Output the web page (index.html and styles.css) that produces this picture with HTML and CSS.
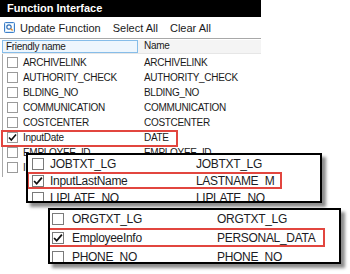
FILE: index.html
```html
<!DOCTYPE html>
<html lang="en">
<head>
    <meta charset="UTF-8">
    <title>Function Interface</title>
    <link rel="stylesheet" href="styles.css">
</head>
<body>

<div class="window">
    <div class="titlebar">Function Interface</div>

    <!-- Toolbar -->
    <div class="toolbar">
        <span class="tool-icon">
            <svg width="11" height="11" viewBox="0 0 11 11">
                <rect x="0.5" y="0.5" width="10" height="10" rx="1" fill="#d9ecfb" stroke="#3d7fc9"/>
                <rect x="2" y="2" width="7" height="7" fill="#ffffff"/>
                <circle cx="5" cy="5" r="2.2" fill="none" stroke="#2f6fb8" stroke-width="1.2"/>
                <line x1="6.6" y1="6.6" x2="8.6" y2="8.6" stroke="#e08a2a" stroke-width="1.4"/>
            </svg>
        </span>
        <span class="tool">Update Function</span>
        <span class="tool">Select All</span>
        <span class="tool">Clear All</span>
    </div>

    <!-- Function list -->
    <div class="list">
        <div class="list-head">
            <div class="head-col sel">Friendly name</div>
            <div class="head-col">Name</div>
        </div>
        <div class="row"><span class="cb"></span><span class="c1">ARCHIVELINK</span><span class="c2">ARCHIVELINK</span></div>
        <div class="row"><span class="cb"></span><span class="c1">AUTHORITY_CHECK</span><span class="c2">AUTHORITY_CHECK</span></div>
        <div class="row"><span class="cb"></span><span class="c1">BLDING_NO</span><span class="c2">BLDING_NO</span></div>
        <div class="row"><span class="cb"></span><span class="c1">COMMUNICATION</span><span class="c2">COMMUNICATION</span></div>
        <div class="row"><span class="cb"></span><span class="c1">COSTCENTER</span><span class="c2">COSTCENTER</span></div>
        <div class="row mark">
            <span class="cb"><svg width="9" height="9" viewBox="0 0 9 9"><polyline points="1,4.5 3.3,7 8,1.5" fill="none" stroke="#111" stroke-width="1.6"/></svg></span>
            <span class="c1">InputDate</span><span class="c2">DATE</span>
        </div>
        <div class="row"><span class="cb"></span><span class="c1">EMPLOYEE_ID</span><span class="c2">EMPLOYEE_ID</span></div>
        <div class="row"><span class="cb"></span><span class="c1">INITIALS</span><span class="c2">INITIALS</span></div>
    </div>
</div>

<!-- Zoomed callouts -->
<div class="popup popup-a">
    <div class="row"><span class="cb"></span><span class="c1">JOBTXT_LG</span><span class="c2">JOBTXT_LG</span></div>
    <div class="row mark">
        <span class="cb"><svg width="10" height="10" viewBox="0 0 9 9"><polyline points="1,4.5 3.3,7 8,1.5" fill="none" stroke="#111" stroke-width="1.6"/></svg></span>
        <span class="c1">InputLastName</span><span class="c2">LASTNAME_M</span>
    </div>
    <div class="row"><span class="cb"></span><span class="c1">LIPLATE_NO</span><span class="c2">LIPLATE_NO</span></div>
</div>

<div class="popup popup-b">
    <div class="row"><span class="cb"></span><span class="c1">ORGTXT_LG</span><span class="c2">ORGTXT_LG</span></div>
    <div class="row mark">
        <span class="cb"><svg width="10" height="10" viewBox="0 0 9 9"><polyline points="1,4.5 3.3,7 8,1.5" fill="none" stroke="#111" stroke-width="1.6"/></svg></span>
        <span class="c1">EmployeeInfo</span><span class="c2">PERSONAL_DATA</span>
    </div>
    <div class="row"><span class="cb"></span><span class="c1">PHONE_NO</span><span class="c2">PHONE_NO</span></div>
</div>

</body>
</html>
```

FILE: styles.css
```css
body {
    margin: 0;
    background: #ffffff;
    font-family: "Liberation Sans", Arial, sans-serif;
    color: #1a1a1a;
}
.window {
    width: 261px;
}
.titlebar {
    height: 17px;
    background-color: #000000;
    color: #ffffff;
    font-weight: bold;
    font-size: 11px;
    line-height: 17px;
    padding-left: 7px;
}

/* Toolbar */
.toolbar {
    height: 21px;
    display: flex;
    align-items: center;
    gap: 12px;
    padding-left: 4px;
    border-bottom: 1px solid #a8a8a8;
    font-size: 11px;
}
.tool-icon {
    display: flex;
    margin-right: -7px;
}
.tool-icon svg {
    display: block;
}

/* List */
.list {
    margin-left: 2px;
    border-left: 1px solid #a9a9a9;
    padding-bottom: 2px;
    font-size: 10px;
    letter-spacing: -0.3px;
}
.list-head {
    display: flex;
    height: 14px;
    margin-top: 1px;
    margin-left: -1px;
    background-color: #f4f4f4;
    border-bottom: 1px solid #e6e6e6;
    box-sizing: border-box;
}
.head-col {
    line-height: 12px;
    padding-left: 6px;
}
.head-col.sel {
    width: 136px;
    box-sizing: border-box;
    padding-left: 3px;
    border: 1px solid #86bde9;
    background-color: #eef6fd;
}
.list .row {
    display: flex;
    align-items: center;
    height: 15px;
    padding-left: 4px;
    position: relative;
}
.list-head + .row {
    margin-top: 1px;
}
.cb {
    width: 11px;
    height: 11px;
    box-sizing: border-box;
    border: 1px solid #9a9a9a;
    background: #ffffff;
    margin-right: 5px;
    display: flex;
    align-items: center;
    justify-content: center;
    flex-shrink: 0;
}
.list .c1 {
    width: 121px;
}

/* Red highlight around the chosen rows */
.row.mark::after {
    content: "";
    position: absolute;
    top: 0;
    box-sizing: border-box;
    border: 2px solid #e2463f;
}
.list .row.mark::after {
    left: -2px;
    width: 177px;
    height: 17px;
}

/* Callout boxes */
.popup {
    position: absolute;
    background: #ffffff;
    border: 2px solid #000000;
    box-sizing: border-box;
    box-shadow: 4px 4px 3px rgba(0, 0, 0, 0.45);
    overflow: hidden;
    font-size: 12px;
    letter-spacing: -0.3px;
    color: #1c1c24;
}
.popup .row {
    display: flex;
    align-items: center;
    position: relative;
}
.popup .cb {
    width: 12px;
    height: 12px;
    border-color: #7a7a7a;
}
.popup-a {
    left: 26px;
    top: 153px;
    width: 296px;
    height: 50px;
}
.popup-a .row {
    height: 17px;
    padding-left: 4px;
}
.popup-a .cb {
    margin-right: 6px;
}
.popup-a .c1 {
    width: 146px;
}
.popup-a .row.mark::after {
    left: -1px;
    width: 255px;
    height: 17px;
}
.popup-b {
    left: 48px;
    top: 208px;
    width: 293px;
    height: 56px;
}
.popup-b .row {
    height: 19px;
    padding-left: 2px;
}
.popup-b .row:first-child {
    height: 18px;
}
.popup-b .cb {
    margin-right: 8px;
}
.popup-b .c1 {
    width: 145px;
}
.popup-b .row.mark::after {
    left: -2px;
    width: 277px;
    height: 19px;
}
```
